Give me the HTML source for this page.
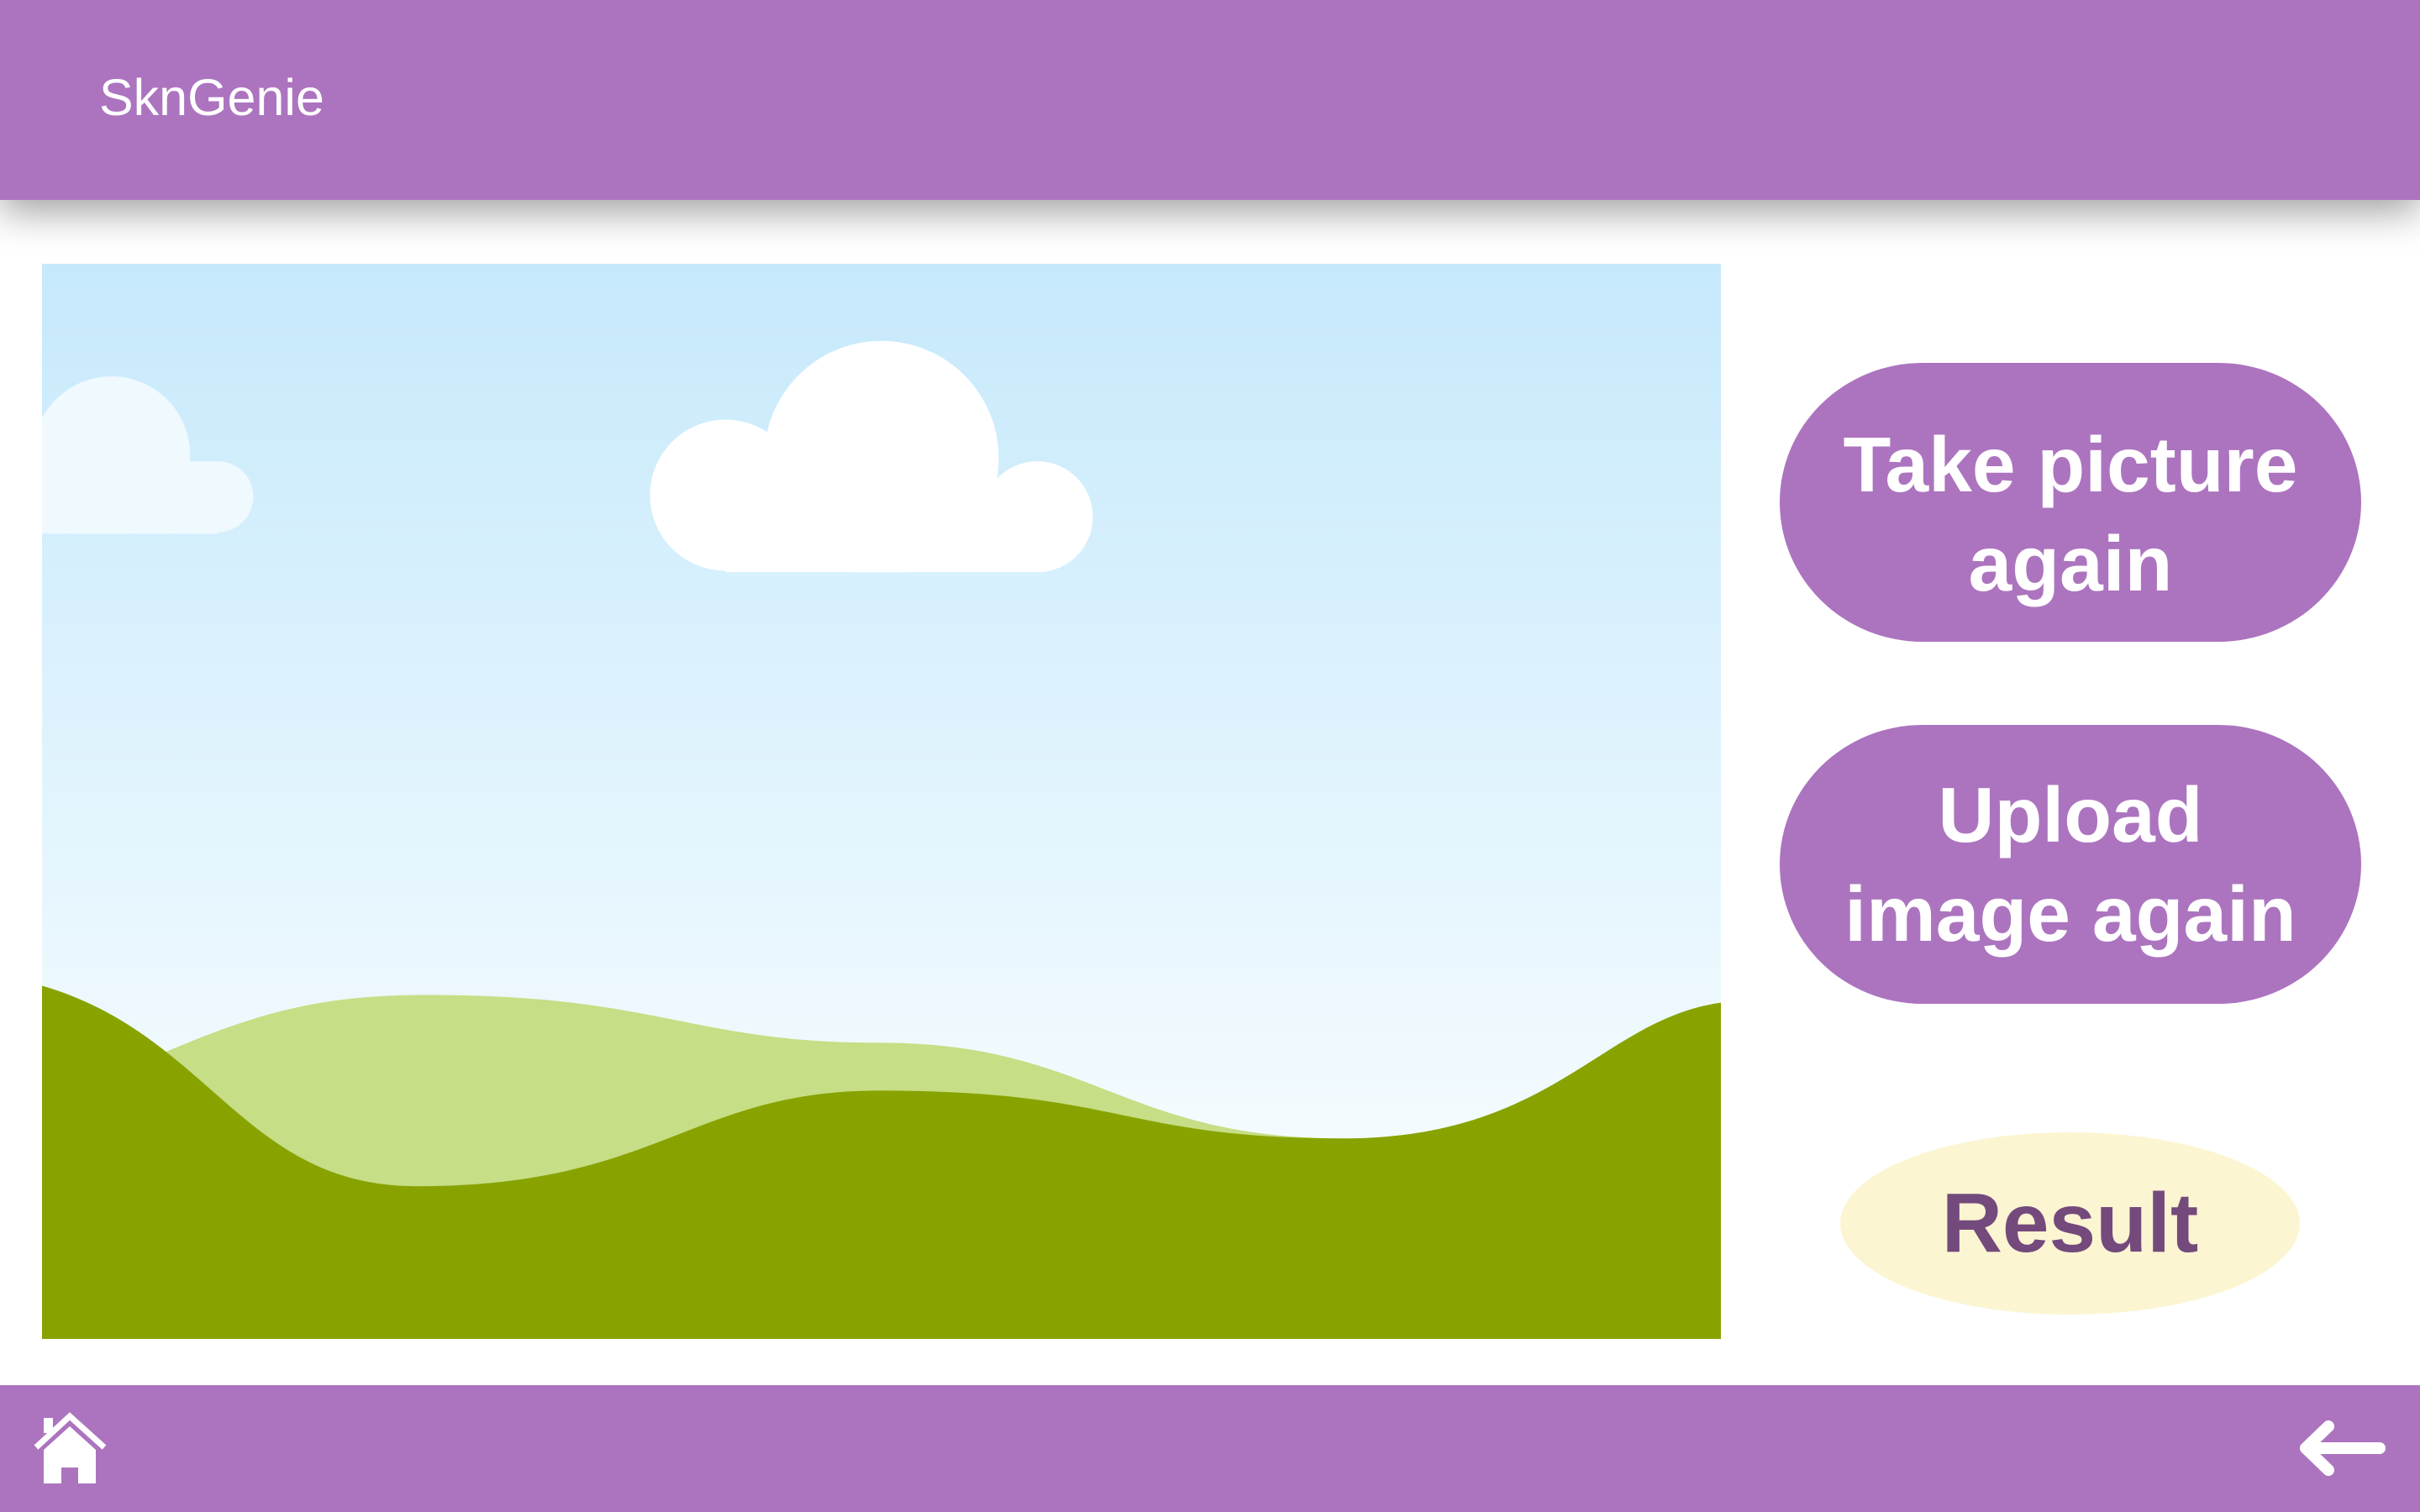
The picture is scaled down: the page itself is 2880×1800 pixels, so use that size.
<!DOCTYPE html>
<html><head><meta charset="utf-8"><style>
html,body{margin:0;padding:0;width:2880px;height:1800px;overflow:hidden;background:#fff;font-family:"Liberation Sans",sans-serif;}
.hdr{position:absolute;left:0;top:0;width:2880px;height:238px;background:#ac74bf;box-shadow:0 12px 45px rgba(0,0,0,0.4);z-index:2}
.title{position:absolute;left:118px;top:86px;font-size:61px;color:#fff;line-height:1}
.img{position:absolute;left:50px;top:314px;width:1998px;height:1280px}
.btn{position:absolute;left:2118px;width:692px;height:332px;background:#ac74bf;border-radius:170px/50%;color:#fff;font-weight:bold;font-size:93px;line-height:118px;text-align:center;display:flex;align-items:center;justify-content:center;box-sizing:border-box}
.res{position:absolute;left:2190px;top:1348px;width:547px;height:217px;background:#fbf5d2;border-radius:50%;color:#744a7c;font-weight:bold;font-size:100px;display:flex;align-items:center;justify-content:center}
.ftr{position:absolute;left:0;top:1649px;width:2880px;height:151px;background:#ac74bf}
</style></head><body>
<div class="hdr"><div class="title">SknGenie</div></div>
<svg class="img" viewBox="0 0 1088 697" preserveAspectRatio="none">
<defs><linearGradient id="sky" x1="0" y1="0" x2="0" y2="1"><stop offset="0" stop-color="#c6e9fc"/><stop offset="0.8" stop-color="#f3fbfe"/></linearGradient>
<clipPath id="cc"><rect x="0" y="0" width="1088" height="200"/></clipPath></defs>
<rect width="1088" height="697" fill="url(#sky)"/>
<g fill="#eff9fe"><circle cx="45" cy="124" r="51"/><circle cx="114" cy="151" r="23"/><rect x="0" y="128" width="114" height="47"/></g>
<g fill="#fff" clip-path="url(#cc)"><circle cx="544" cy="126" r="76"/><circle cx="443" cy="150" r="49"/><circle cx="645" cy="164" r="36"/><rect x="443" y="150" width="202" height="50"/></g>
<path d="M73 514 C140 485 180 474 250 474 C400 474 420 505 543 505 C680 505 700 567 843 567 L843 697 L73 697 Z" fill="#c6de85"/>
<path d="M0 468 C110 500 130 598 243 598 C400 598 420 536 543 536 C700 536 700 567 843 567 C980 567 1010 490 1088 479 L1088 697 L0 697 Z" fill="#88a300"/>
</svg>
<div class="btn" style="top:432px;padding-top:28px">Take picture<br>again</div>
<div class="btn" style="top:863px;padding-top:0px">Upload<br>image again</div>
<div class="res">Result</div>
<div class="ftr"></div>
<svg style="position:absolute;left:0;top:1620px" width="200" height="180" viewBox="0 0 200 180">
<g fill="#fff"><rect x="52" y="68" width="11" height="18"/>
<path d="M83 78 L114 106 L114 146 L93 146 L93 127 L73 127 L73 146 L52 146 L52 106 Z"/></g>
<path d="M43 103 L83 66 L124 103" stroke="#fff" stroke-width="7" fill="none"/>
</svg>
<svg style="position:absolute;left:2680px;top:1620px" width="200" height="180" viewBox="0 0 200 180">
<path d="M152 104 L64 104 M91 78 L64 104 L91 130" stroke="#fff" stroke-width="14" stroke-linecap="round" stroke-linejoin="round" fill="none"/>
</svg>
</body></html>
